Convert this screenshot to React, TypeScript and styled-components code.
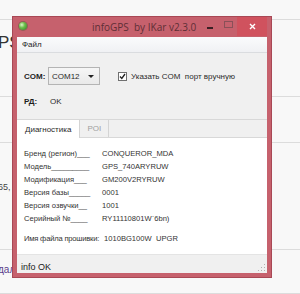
import React from "react";
import styled, { createGlobalStyle } from "styled-components";

// global

const GlobalStyle = createGlobalStyle`
    html, body {
        margin: 0;
        padding: 0;
        background: #f8f8f8;
        font-family: "Liberation Sans", "DejaVu Sans", sans-serif;
    }
`;

// page behind the window

const Desktop = styled.div`
    position: relative;
    width: 300px;
    height: 294px;
    overflow: hidden;
    background: #f8f8f8;
`;

const PageBand = styled.div<{ h: number; pad?: number }>`
    height: ${(p) => p.h}px;
    box-sizing: border-box;
    padding-top: ${(p) => p.pad || 0}px;
    border-bottom: 1px solid #dcdcdc;
    display: flex;
    align-items: flex-start;
`;

const PageText = styled.span<{ size: number; color?: string }>`
    font-size: ${(p) => p.size}px;
    line-height: 1.15;
    color: ${(p) => p.color || "#333"};
    white-space: nowrap;
    margin-left: -2px;
`;

// window frame

const Window = styled.div`
    position: absolute;
    left: 12px;
    top: 16px;
    width: 260px;
    height: 262px;
    box-sizing: border-box;
    background: #c6616d;
    border: 1px solid #a84855;
    padding: 0 4px 4px 4px;
    display: flex;
    flex-direction: column;
`;

const TitleBar = styled.div`
    height: 20px;
    display: flex;
    align-items: center;
`;

const AppIcon = styled.div`
    width: 8px;
    height: 8px;
    border-radius: 50%;
    margin-left: 2px;
    margin-top: -2px;
    background: radial-gradient(circle at 35% 35%, #d8f5c8 0%, #6cc04a 40%, #2e7a2a 100%);
    box-shadow: 0 0 0 1px rgba(60, 90, 50, 0.4);
`;

const Title = styled.div`
    flex: 1;
    margin-left: 65px;
    font-family: "Open Sans", "Liberation Sans", sans-serif;
    font-size: 10px;
    color: #5e2f36;
    white-space: pre;
`;

const Controls = styled.div`
    display: flex;
    align-items: stretch;
    height: 19px;
    align-self: flex-start;
`;

const CtrlButton = styled.div<{ w: number; close?: boolean }>`
    width: ${(p) => p.w}px;
    display: flex;
    align-items: center;
    justify-content: center;
    background: ${(p) => (p.close ? "#d0525e" : "transparent")};
`;

const MinGlyph = styled.div`
    width: 6px;
    height: 2px;
    background: #3a2024;
    margin-top: 3px;
`;

const MaxGlyph = styled.div`
    width: 7px;
    height: 5px;
    border: 1px solid #8a5058;
    margin-top: -4px;
`;

// client

const Client = styled.div`
    flex: 1;
    background: #f0f0f0;
    display: flex;
    flex-direction: column;
    font-size: 8px;
    color: #2a2a2a;
    min-height: 0;
`;

const MenuBar = styled.div`
    height: 15px;
    display: flex;
    align-items: center;
    padding-left: 5px;
    background: linear-gradient(#fafbfc, #f0f1f4);
    border-bottom: 1px solid #dadcdf;
`;

const MenuItem = styled.span`
    font-size: 8px;
    color: #1e1e1e;
`;

const Form = styled.div`
    display: flex;
    flex-direction: column;
    padding: 14px 0 0 7px;
    gap: 7px;
    height: 66px;
    box-sizing: border-box;
`;

const FormRow = styled.div`
    display: flex;
    align-items: center;
    height: 18px;
`;

const FieldLabel = styled.span<{ w: number }>`
    width: ${(p) => p.w}px;
    font-weight: bold;
    font-size: 8px;
    color: #1e1e1e;
`;

const Combo = styled.div`
    width: 52px;
    height: 18px;
    box-sizing: border-box;
    border: 1px solid #b4b4b4;
    background: linear-gradient(#f6f6f6, #e9e9e9);
    display: flex;
    align-items: center;
    justify-content: space-between;
    padding: 0 5px 0 3px;
    font-size: 8px;
`;

const ComboArrow = styled.span`
    width: 0;
    height: 0;
    border-left: 3px solid transparent;
    border-right: 3px solid transparent;
    border-top: 3px solid #222;
`;

const Check = styled.label`
    display: flex;
    align-items: center;
    margin-left: 18px;
    gap: 4px;
    font-size: 8px;
`;

const CheckBox = styled.span`
    width: 9px;
    height: 9px;
    box-sizing: border-box;
    border: 1px solid #707070;
    background: #fff;
    display: flex;
    align-items: center;
    justify-content: center;
`;

// tabs

const Tabs = styled.div`
    flex: 1;
    display: flex;
    flex-direction: column;
    min-height: 0;
`;

const TabStrip = styled.div`
    display: flex;
    height: 17px;
    border-bottom: 1px solid #d8d8d8;
    border-top: 1px solid #d8d8d8;
`;

const Tab = styled.div<{ active?: boolean }>`
    box-sizing: border-box;
    padding: 0 ${(p) => (p.active ? "8px" : "7px")};
    display: flex;
    align-items: center;
    font-size: 8px;
    color: ${(p) => (p.active ? "#2a2a2a" : "#a0a0a0")};
    background: ${(p) => (p.active ? "#ffffff" : "#f0f0f0")};
    border-right: 1px solid #d4d4d4;
    margin-bottom: ${(p) => (p.active ? "-1px" : "0")};
    height: ${(p) => (p.active ? "18px" : "17px")};
`;

const Panel = styled.div`
    flex: 1;
    background: #ffffff;
    padding: 9px 0 0 7px;
    display: flex;
    flex-direction: column;
`;

const InfoRow = styled.div<{ gapTop?: number }>`
    display: flex;
    height: 13px;
    align-items: center;
    margin-top: ${(p) => p.gapTop || 0}px;
    font-size: 7.6px;
    color: #333;
    white-space: pre;
`;

const InfoLabel = styled.span<{ w: number; tight?: boolean }>`
    width: ${(p) => p.w}px;
    flex-shrink: 0;
    letter-spacing: ${(p) => (p.tight ? "-0.2px" : "0")};
`;

const StatusBar = styled.div`
    height: 19px;
    box-sizing: border-box;
    display: flex;
    align-items: flex-end;
    justify-content: space-between;
    padding: 0 2px 1px 4px;
    font-size: 9px;
    color: #222;
    border-top: 1px solid #e4e4e4;
`;

const Grip = styled.div`
    width: 8px;
    height: 8px;
    margin-bottom: 1px;
    background: radial-gradient(circle, #b0b0b0 40%, transparent 45%) 0 0 / 3px 3px;
    clip-path: polygon(100% 0, 100% 100%, 0 100%);
`;

const rows: [string, string][] = [
    ["Бренд (регион)___", "CONQUEROR_MDA"],
    ["Модель_________", "GPS_740ARYRUW"],
    ["Модификация___", "GM200V2RYRUW"],
    ["Версия базы_____", "0001"],
    ["Версия озвучки__", "1001"],
    ["Серийный №____", "RY11110801W`6bn)"],
];

function App() {
    return (
        <Desktop>
            <GlobalStyle />
            <PageBand h={20} />
            <PageBand h={77} pad={13}>
                <PageText size={17} color="#333">PS</PageText>
            </PageBand>
            <PageBand h={46} />
            <PageBand h={107} pad={39}>
                <PageText size={9} color="#444">65,</PageText>
            </PageBand>
            <PageBand h={44} pad={14}>
                <PageText size={10} color="#5b3d8c">дал</PageText>
            </PageBand>

            <Window>
                <TitleBar>
                    <AppIcon />
                    <Title>infoGPS  by IKar v2.3.0</Title>
                    <Controls>
                        <CtrlButton w={18}><MinGlyph /></CtrlButton>
                        <CtrlButton w={18}><MaxGlyph /></CtrlButton>
                        <CtrlButton w={30} close>
                            <svg width="7" height="7" viewBox="0 0 7 7">
                                <path d="M1 1L6 6M6 1L1 6" stroke="#fff" strokeWidth="1.4" />
                            </svg>
                        </CtrlButton>
                    </Controls>
                </TitleBar>
                <Client>
                    <MenuBar>
                        <MenuItem>Файл</MenuItem>
                    </MenuBar>
                    <Form>
                        <FormRow>
                            <FieldLabel w={24}>COM:</FieldLabel>
                            <Combo>
                                <span>COM12</span>
                                <ComboArrow />
                            </Combo>
                            <Check>
                                <CheckBox>
                                    <svg width="7" height="7" viewBox="0 0 7 7">
                                        <path d="M1 3.5L2.8 5.5L6 1" stroke="#222" strokeWidth="1.3" fill="none" />
                                    </svg>
                                </CheckBox>
                                Указать COM&nbsp; порт вручную
                            </Check>
                        </FormRow>
                        <FormRow>
                            <FieldLabel w={26}>РД:</FieldLabel>
                            <span>OK</span>
                        </FormRow>
                    </Form>
                    <Tabs>
                        <TabStrip>
                            <Tab active>Диагностика</Tab>
                            <Tab>POI</Tab>
                        </TabStrip>
                        <Panel>
                            {rows.map(([label, value]) => (
                                <InfoRow key={label}>
                                    <InfoLabel w={78}>{label}</InfoLabel>
                                    <span>{value}</span>
                                </InfoRow>
                            ))}
                            <InfoRow gapTop={7}>
                                <InfoLabel w={80} tight>Имя файла прошивки:</InfoLabel>
                                <span>1010BG100W  UPGR</span>
                            </InfoRow>
                        </Panel>
                    </Tabs>
                    <StatusBar>
                        <span>info OK</span>
                        <Grip />
                    </StatusBar>
                </Client>
            </Window>
        </Desktop>
    );
}

export default App;
